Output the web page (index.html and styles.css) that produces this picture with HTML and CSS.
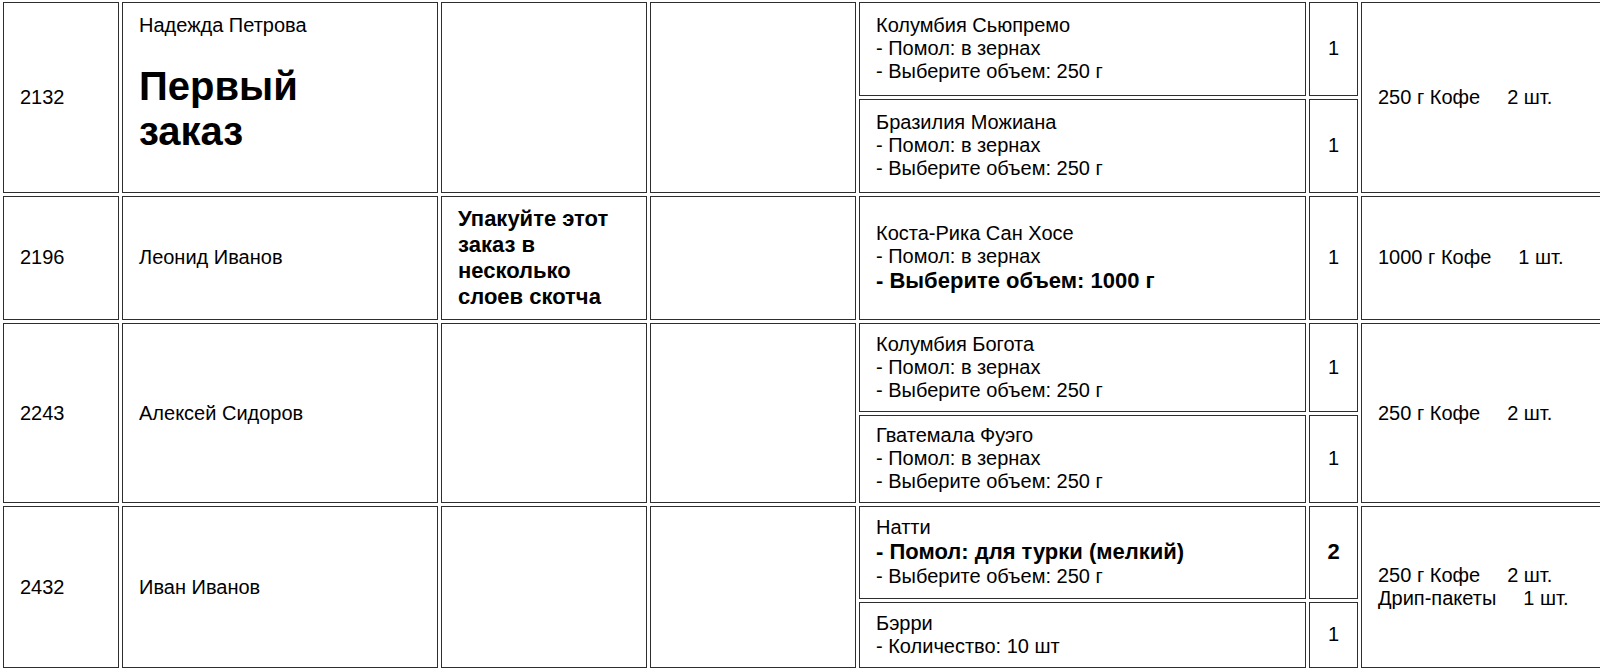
FILE: index.html
```html
<!DOCTYPE html>
<html lang="ru">
<head>
<meta charset="utf-8">
<title>Заказы</title>
<link rel="stylesheet" href="styles.css">
</head>
<body>
<table class="orders">
  <colgroup>
    <col class="c-id">
    <col class="c-customer">
    <col class="c-note">
    <col class="c-extra">
    <col class="c-product">
    <col class="c-qty">
    <col class="c-summary">
  </colgroup>
  <tbody>
    <tr>
      <td rowspan="2">2132</td>
      <td rowspan="2" class="customer customer-flagged">
        <div>Надежда Петрова</div>
        <h1 class="flag">Первый<br>заказ</h1>
      </td>
      <td rowspan="2" class="note"></td>
      <td rowspan="2"></td>
      <td>Колумбия Сьюпремо<br>- Помол: в зернах<br>- Выберите объем: 250 г</td>
      <td class="qty">1</td>
      <td rowspan="2">250 г Кофе<span class="count">2 шт.</span></td>
    </tr>
    <tr>
      <td>Бразилия Можиана<br>- Помол: в зернах<br>- Выберите объем: 250 г</td>
      <td class="qty">1</td>
    </tr>

    <tr>
      <td>2196</td>
      <td class="customer">Леонид Иванов</td>
      <td class="note">Упакуйте этот заказ в несколько слоев скотча</td>
      <td></td>
      <td>Коста-Рика Сан Хосе<br>- Помол: в зернах<br><b class="opt-strong">- Выберите объем: 1000 г</b></td>
      <td class="qty">1</td>
      <td>1000 г Кофе<span class="count">1 шт.</span></td>
    </tr>

    <tr class="compact">
      <td rowspan="2">2243</td>
      <td rowspan="2" class="customer">Алексей Сидоров</td>
      <td rowspan="2" class="note"></td>
      <td rowspan="2"></td>
      <td>Колумбия Богота<br>- Помол: в зернах<br>- Выберите объем: 250 г</td>
      <td class="qty">1</td>
      <td rowspan="2">250 г Кофе<span class="count">2 шт.</span></td>
    </tr>
    <tr class="compact">
      <td>Гватемала Фуэго<br>- Помол: в зернах<br>- Выберите объем: 250 г</td>
      <td class="qty">1</td>
    </tr>

    <tr>
      <td rowspan="2">2432</td>
      <td rowspan="2" class="customer">Иван Иванов</td>
      <td rowspan="2" class="note"></td>
      <td rowspan="2"></td>
      <td>Натти<br><b class="opt-strong">- Помол: для турки (мелкий)</b><br>- Выберите объем: 250 г</td>
      <td class="qty"><b class="qty-strong">2</b></td>
      <td rowspan="2">250 г Кофе<span class="count">2 шт.</span><br>Дрип-пакеты<span class="count">1 шт.</span></td>
    </tr>
    <tr>
      <td>Бэрри<br>- Количество: 10 шт</td>
      <td class="qty">1</td>
    </tr>

    <tr class="next">
      <td>&nbsp;</td>
      <td>&nbsp;</td>
      <td>&nbsp;</td>
      <td>&nbsp;</td>
      <td>&nbsp;</td>
      <td>&nbsp;</td>
      <td>&nbsp;</td>
    </tr>
  </tbody>
</table>
</body>
</html>
```

FILE: styles.css
```css
html, body {
  margin: 0;
  padding: 0;
  overflow: hidden;
  background: #ffffff;
}

body {
  font-family: "Liberation Sans", Arial, sans-serif;
  font-size: 20px;
  line-height: normal;
  color: #000000;
}

.orders {
  border-collapse: separate;
  border-spacing: 3px;
  table-layout: fixed;
  width: 1664px;
  margin-top: -1px;
}

.orders td {
  box-sizing: border-box;
  border: 1px solid #2e2e2e;
  padding: 9.4px 16px;
  vertical-align: middle;
  text-align: left;
}

.c-id { width: 116px; }
.c-customer { width: 316px; }
.c-note { width: 206px; }
.c-extra { width: 206px; }
.c-product { width: 447px; }
.c-qty { width: 49px; }
.c-summary { width: 300px; }

.orders td.customer-flagged {
  padding-top: 11px;
  padding-bottom: 11px;
}

.orders tr.compact td {
  padding-top: 8.6px;
  padding-bottom: 8.6px;
}

.flag {
  font-size: 40px;
  font-weight: bold;
  line-height: normal;
  margin: 0.67em 0;
}

.note {
  font-size: 22px;
  font-weight: bold;
  line-height: normal;
}

.opt-strong {
  font-size: 22px;
  font-weight: bold;
}

.orders td.qty {
  text-align: center;
  padding-left: 0;
  padding-right: 0;
}

.qty-strong {
  font-size: 22px;
  font-weight: bold;
}

.count {
  padding-left: 27px;
}
```
